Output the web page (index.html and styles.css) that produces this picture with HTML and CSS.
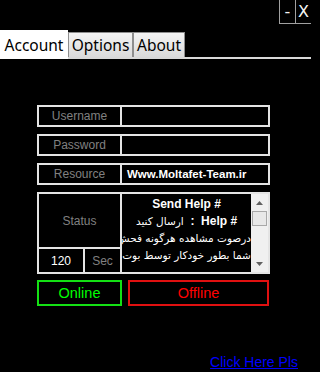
FILE: index.html
```html
<!DOCTYPE html>
<html>
<head>
<meta charset="utf-8">
<title>Account</title>
<link rel="stylesheet" href="styles.css">
</head>
<body>
<div class="titlebar">
  <div class="ctrl"><span class="cbtn">-</span><span class="cbtn">X</span></div>
</div>
<div class="tabs">
  <div class="tab active">Account</div>
  <div class="tab opt">Options</div>
  <div class="tab abt">About</div>
</div>
<div class="panel">
  <div class="form">
    <div class="row"><div class="cell label">Username</div><div class="cell value"></div></div>
    <div class="row"><div class="cell label">Password</div><div class="cell value"></div></div>
    <div class="row"><div class="cell label">Resource</div><div class="cell value">Www.Moltafet-Team.ir</div></div>
    <div class="status">
      <div class="cell label st">Status</div>
      <div class="cell msg">
        <div class="msgtext">
          <p>Send Help #</p>
          <p dir="ltr"><span class="part fa" dir="rtl">ارسال کنید</span><span class="part">&nbsp; :&nbsp; Help #</span></p>
          <p class="fa" dir="rtl">درصوت مشاهده هرگونه فحش</p>
          <p class="fa" dir="rtl">شما بطور خودکار توسط بوت</p>
        </div>
        <div class="sb">
          <div class="arr"><svg width="7" height="4" viewBox="0 0 7 4"><path d="M0 4 L3.5 0 L7 4 Z" fill="#606060"/></svg></div>
          <div class="thumb"></div>
          <div class="track"></div>
          <div class="arr"><svg width="7" height="4" viewBox="0 0 7 4"><path d="M0 0 L7 0 L3.5 4 Z" fill="#606060"/></svg></div>
        </div>
      </div>
      <div class="cell num">120</div>
      <div class="cell label sec">Sec</div>
    </div>
    <div class="btns">
      <div class="btn on">Online</div>
      <div class="btn off">Offline</div>
    </div>
  </div>
  <div class="foot"><a href="#" class="link">Click Here Pls</a></div>
</div>
</body>
</html>
```
FILE: styles.css
```css
html, body {
  margin: 0;
  background: #000;
}
body {
  width: 311px;
  height: 372px;
  overflow: hidden;
  font-family: "Liberation Sans", "DejaVu Sans", sans-serif;
}

.titlebar {
  height: 24px;
  display: flex;
  justify-content: flex-end;
}
.ctrl {
  display: flex;
  height: 23px;
  border-left: 1px solid #a0a0a0;
  border-bottom: 1px solid #a0a0a0;
}
.cbtn {
  width: 15px;
  color: #f4f4f4;
  font: 16px "DejaVu Sans", sans-serif;
  display: flex;
  align-items: center;
  justify-content: center;
}
.cbtn + .cbtn {
  border-left: 1px solid #a0a0a0;
}

.tabs {
  margin-top: 6px;
  height: 27px;
  display: flex;
  align-items: flex-end;
  border-bottom: 2px solid #d8d8d8;
}
.tab {
  box-sizing: border-box;
  height: 25px;
  display: flex;
  align-items: center;
  justify-content: center;
  font: 15.5px "Noto Sans", sans-serif;
  color: #000;
  background: linear-gradient(#f4f4f4, #dadada);
  border: 1px solid #8e8e8e;
  border-bottom: none;
}
.tab.active {
  width: 68px;
  height: 29px;
  margin-bottom: -2px;
  background: #fff;
  border: none;
}
.tab.opt { width: 65px; }
.tab.abt { width: 52px; }

.panel {
  padding-top: 46px;
}
.form {
  margin-left: 37px;
  width: 233px;
}
.row {
  box-sizing: border-box;
  display: grid;
  grid-template-columns: 81px 146px;
  gap: 2px;
  padding: 2px;
  height: 22px;
  background: #e4e4e4;
  margin-bottom: 7px;
}
.cell {
  background: #000;
  display: flex;
  align-items: center;
  justify-content: center;
  white-space: nowrap;
}
.label {
  color: #808080;
  font-size: 12px;
}
.value {
  justify-content: flex-start;
  padding-left: 5px;
  color: #fff;
  font-weight: bold;
  font-size: 11.5px;
}

.status {
  display: grid;
  grid-template-columns: 44px 35px 146px;
  grid-template-rows: 53px 23px;
  grid-template-areas: "st st msg" "num sec msg";
  gap: 2px;
  padding: 2px;
  background: #e4e4e4;
}
.st { grid-area: st; }
.num { grid-area: num; color: #fff; font-size: 12px; }
.sec { grid-area: sec; }
.msg {
  grid-area: msg;
  align-items: stretch;
  justify-content: stretch;
  overflow: hidden;
}
.msgtext {
  flex: 1;
  min-width: 0;
  overflow: hidden;
  padding-top: 2px;
  color: #fff;
  font-weight: bold;
  font-size: 12px;
  line-height: 17px;
  text-align: center;
}
.msgtext p {
  margin: 0;
  white-space: nowrap;
}
.fa {
  font-family: "DejaVu Sans", sans-serif;
  font-weight: normal;
  font-size: 10.5px;
}
.part {
  display: inline-block;
}
.sb {
  width: 17px;
  background: #f0f0f0;
  display: flex;
  flex-direction: column;
}
.arr {
  height: 17px;
  display: flex;
  align-items: center;
  justify-content: center;
}
.thumb {
  box-sizing: border-box;
  height: 15px;
  margin: 0 1px;
  background: #e8e8e8;
  border: 1px solid #a8a8a8;
}
.track { flex: 1; }

.btns {
  display: flex;
  gap: 6px;
  margin-top: 6px;
}
.btn {
  box-sizing: border-box;
  height: 26px;
  display: flex;
  align-items: center;
  justify-content: center;
  font-size: 14.5px;
}
.on {
  width: 85px;
  border: 2px solid #14e014;
  color: #00ff00;
}
.off {
  width: 141px;
  border: 2px solid #e01010;
  color: #ff0000;
}

.foot {
  display: flex;
  justify-content: flex-end;
  padding-right: 13px;
  margin-top: 48px;
}
.link {
  color: #0000ff;
  font-size: 14px;
  line-height: 17px;
  text-decoration: underline;
}
```
